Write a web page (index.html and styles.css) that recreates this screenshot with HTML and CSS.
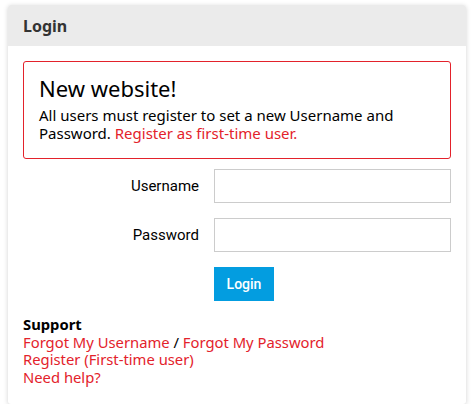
FILE: index.html
```html
<!DOCTYPE html>
<html>
<head>
<meta charset="utf-8">
<link rel="stylesheet" href="styles.css">
</head>
<body>
<div class="card">
  <div class="card-header">Login</div>
  <div class="card-body">
    <div class="alert">
      <h2 class="alert-title">New website!</h2>
      <p class="alert-text">All users must register to set a new Username and Password. <a href="#" class="link">Register as first-time user.</a></p>
    </div>
    <form class="form">
      <div class="row">
        <label class="label">Username</label>
        <input class="input" type="text">
      </div>
      <div class="row">
        <label class="label">Password</label>
        <input class="input" type="password">
      </div>
      <div class="row">
        <span class="label"></span>
        <button type="button" class="btn">Login</button>
      </div>
    </form>
    <div class="support">
      <div class="support-title">Support</div>
      <div><a href="#" class="link">Forgot My Username</a> / <a href="#" class="link">Forgot My Password</a></div>
      <div><a href="#" class="link">Register (First-time user)</a></div>
      <div><a href="#" class="link">Need help?</a></div>
    </div>
  </div>
</div>
</body>
</html>
```
FILE: styles.css
```css
html, body { margin: 0; padding: 0; background: #fff; }
body {
  padding: 5px 8px 0 8px;
  font-family: "Noto Sans", "Open Sans", sans-serif;
  color: #000;
}
.card {
  width: 458px;
  background: #fff;
  border-radius: 3px;
  box-shadow: 0 1px 5px rgba(0,0,0,0.18);
  overflow: hidden;
}
.card-header {
  background: #ebebeb;
  height: 41px;
  line-height: 42px;
  padding: 0 15px;
  font-size: 16px;
  font-weight: bold;
  color: #333;
}
.card-body {
  padding: 15px 15px 18px 15px;
}
.alert {
  border: 1px solid #e3222b;
  border-radius: 3px;
  padding: 11px 15px 16px 15px;
}
.alert-title {
  margin: 0 0 4px 0;
  font-size: 22px;
  font-weight: normal;
  line-height: 30px;
}
.alert-text {
  margin: 0;
  font-size: 15px;
  line-height: 17.5px;
}
.link { color: #e3222b; text-decoration: none; }
.form {
  margin-top: 10px;
  display: flex;
  flex-direction: column;
  gap: 15px;
}
.row {
  display: flex;
  align-items: center;
}
.label {
  width: 176px;
  text-align: right;
  padding-right: 15px;
  box-sizing: content-box;
  font-family: Roboto, sans-serif;
  font-size: 15px;
}
.input {
  width: 237px;
  height: 34px;
  box-sizing: border-box;
  border: 1px solid #ccc;
  margin: 0;
  padding: 0 8px;
}
.btn {
  background: #039de0;
  color: #fff;
  border: none;
  height: 34px;
  width: 60px;
  font-family: Roboto, sans-serif;
  font-size: 14px;
  font-weight: 500;
  padding: 0;
}
.support {
  margin-top: 15px;
  font-size: 14.8px;
  line-height: 17.5px;
}
.support-title { font-weight: bold; }
```
